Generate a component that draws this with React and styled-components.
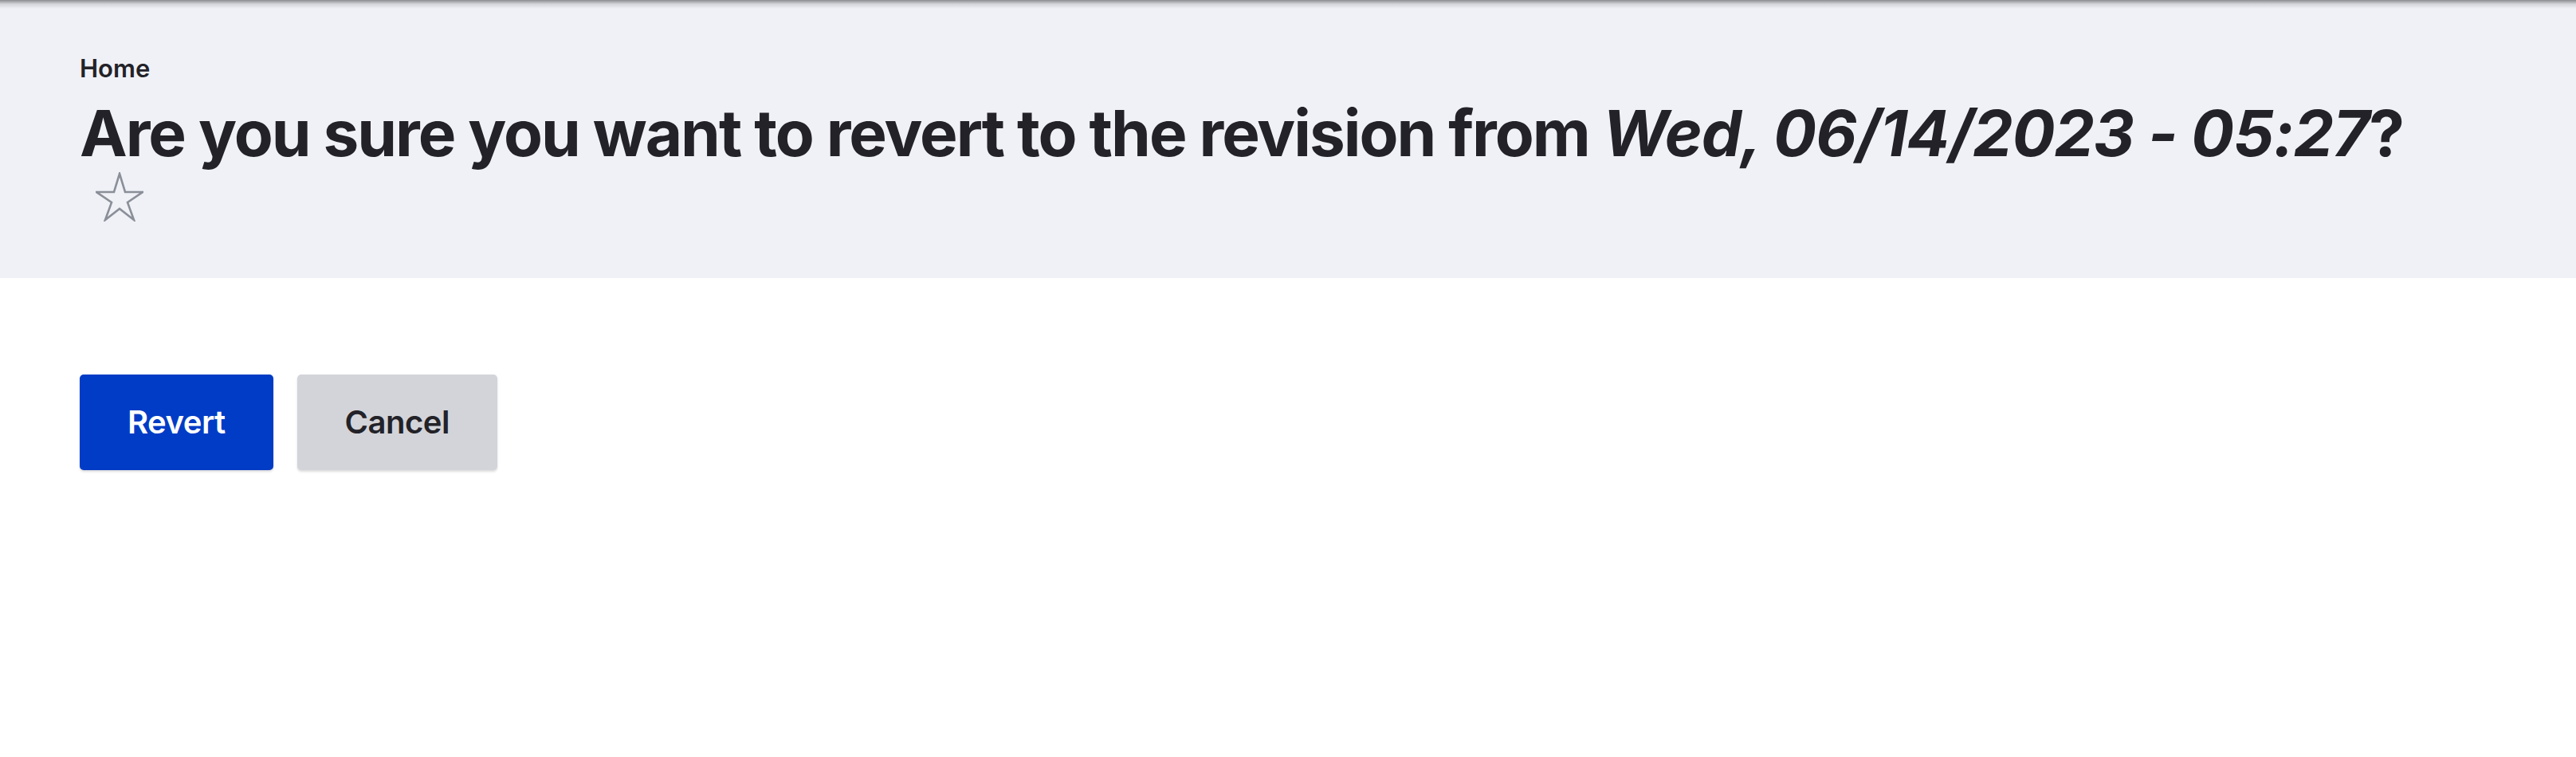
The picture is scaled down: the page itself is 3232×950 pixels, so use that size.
import styled, { createGlobalStyle } from "styled-components";

const GlobalStyle = createGlobalStyle`
  html, body {
    margin: 0;
    padding: 0;
    background: #ffffff;
    font-family: Inter, "Noto Sans", "Liberation Sans", sans-serif;
    color: #222228;
  }
`

const Header = styled.header`
  box-sizing: border-box;
  min-height: 349px;
  padding: 66px 100px 0;
  background-color: #f0f1f6;
  background-image: linear-gradient(to bottom, rgba(0, 0, 0, 0.42) 0px, rgba(0, 0, 0, 0.12) 5px, rgba(0, 0, 0, 0) 11px);
`

const Breadcrumb = styled.nav`
  font-size: 31px;
  line-height: 40px;
  font-weight: 600;
  margin-bottom: 12px;
  color: #222228;
`

const Title = styled.h1`
  margin: 0;
  font-size: 80px;
  line-height: 98px;
  font-weight: 700;
  letter-spacing: -2px;
  white-space: nowrap;
  color: #222228;

  em {
    font-style: italic;
    letter-spacing: -1.1px;
  }
`

const StarButton = styled.button`
  display: block;
  width: 60px;
  height: 62px;
  margin: 0 0 0 20px;
  padding: 0;
  border: none;
  background: transparent;
  cursor: pointer;
`

const Content = styled.main`
  padding: 121px 100px;
`

const Actions = styled.div`
  display: flex;
  flex-direction: row;
  align-items: center;
  gap: 30px;
`

const Button = styled.button`
  box-sizing: border-box;
  height: 120px;
  padding: 0 ${props => props.$pad}px;
  border: none;
  border-radius: 5px;
  font-family: Inter, "Noto Sans", "Liberation Sans", sans-serif;
  font-size: 40px;
  line-height: 60px;
  font-weight: 600;
  letter-spacing: -0.5px;
  background: ${props => props.$primary ? "#003cc5" : "#d3d4d9"};
  color: ${props => props.$primary ? "#ffffff" : "#222228"};
  box-shadow: 0 2px 3px rgba(0, 0, 0, 0.14);
  cursor: pointer;
`

function Star() {
  return (
    <svg width="60" height="62" viewBox="0 0 60 62">
      <polygon
        points="30,2 37,25 59,25 40,38 48,60 30,46 12,60 20,38 1,25 23,25"
        fill="none"
        stroke="#8a8f98"
        strokeWidth="2.6"
        strokeLinejoin="miter"
      />
    </svg>
  );
}

export default function App() {
  return (
    <>
      <GlobalStyle />
      <Header>
        <Breadcrumb>Home</Breadcrumb>
        <Title>
          Are you sure you want to revert to the revision from <em>Wed, 06/14/2023 - 05:27</em>?
        </Title>
        <StarButton aria-label="Add to shortcuts">
          <Star />
        </StarButton>
      </Header>
      <Content>
        <Actions>
          <Button $primary $pad={60}>Revert</Button>
          <Button $pad={60}>Cancel</Button>
        </Actions>
      </Content>
    </>
  );
}
